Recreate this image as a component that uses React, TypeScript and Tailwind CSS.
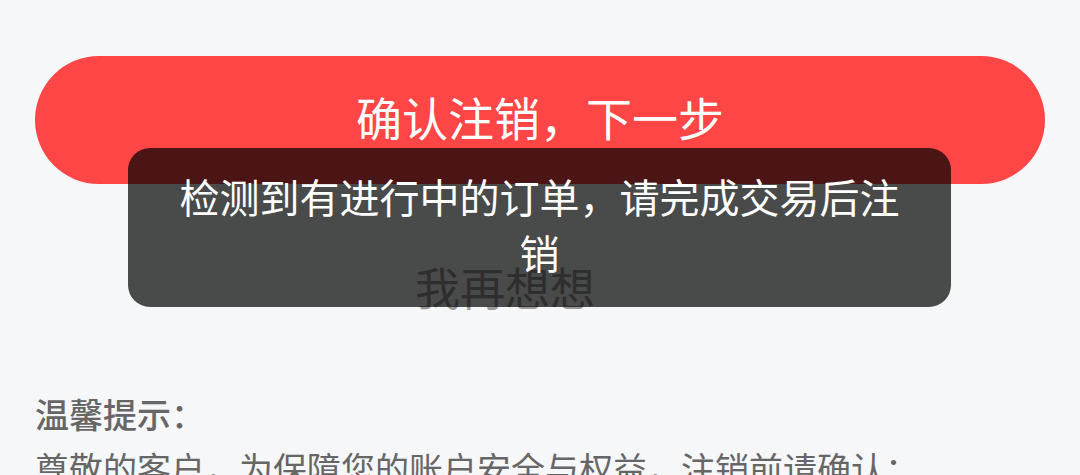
import React from "react";

export default function App() {
  return (
    <div
      className="relative w-[1080px] h-[475px] overflow-hidden bg-[#f6f7f9]"
      style={{ fontFamily: '"Noto Sans CJK SC", "Noto Sans", sans-serif' }}
    >
      <div className="flex flex-col pt-[56px] px-[35px]">
        <button className="h-[128px] w-full rounded-full bg-[#ff4646] text-white text-[46px] leading-none flex items-center justify-center pb-[8px]">
          确认注销，下一步
        </button>
        <button className="mt-[38px] h-[128px] w-full flex items-center justify-center text-[45px] leading-none text-[#9a9a9a] pr-[70px]">
          我再想想
        </button>
        <div className="mt-[40px] text-[34px] leading-[48px] text-[#666666] font-medium">温馨提示：</div>
        <div className="mt-[6px] text-[34px] leading-[48px] text-[#666666] whitespace-nowrap">
          尊敬的客户，为保障您的账户安全与权益，注销前请确认：
        </div>
      </div>

      <div className="absolute left-[128px] top-[148px] w-[823px] h-[159px] rounded-[22px] bg-black/70 px-[50px] pt-[20px] text-center text-white text-[40px] leading-[56px]">
        检测到有进行中的订单，请完成交易后注销
      </div>
    </div>
  );
}
